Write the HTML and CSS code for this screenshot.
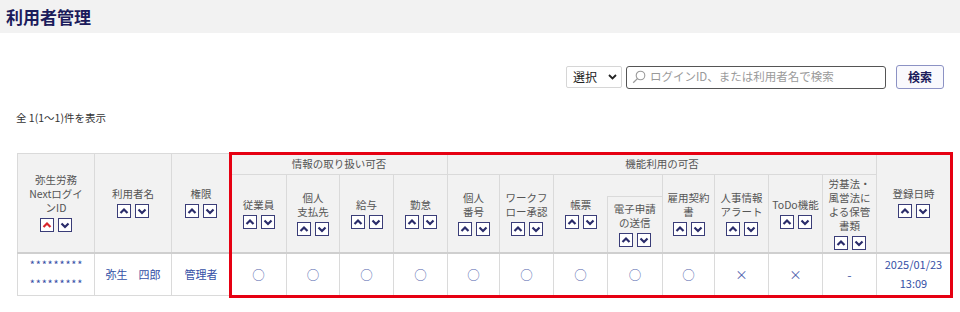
FILE: index.html
```html
<!DOCTYPE html>
<html lang="ja">
<head>
<meta charset="utf-8">
<title>利用者管理</title>
<link rel="stylesheet" href="styles.css">
</head>
<body>
<header class="page-head"><h1 class="page-title">利用者管理</h1></header>

<div class="toolbar">
  <div class="select">選択 <svg class="sel-arrow" width="9" height="6" viewBox="0 0 9 6"><polyline points="1,1 4.5,4.5 8,1" fill="none" stroke="#222" stroke-width="1.8"/></svg></div>
  <div class="search">
    <svg class="lens" width="14" height="14" viewBox="0 0 14 14"><circle cx="8.5" cy="5.5" r="4.3" fill="none" stroke="#9a9a9a" stroke-width="1.1"/><line x1="5.4" y1="8.6" x2="1.2" y2="12.8" stroke="#9a9a9a" stroke-width="1.3"/></svg>
    <span class="placeholder">ログインID、または利用者名で検索</span>
  </div>
  <button class="btn-search">検索</button>
</div>

<p class="count">全 1(1～1)件を表示</p>

<div class="table-wrap">
  <table class="users">
    <colgroup>
      <col style="width:77px"><col style="width:77px"><col style="width:59px">
      <col style="width:56px"><col style="width:53px"><col style="width:54px"><col style="width:54px">
      <col style="width:52px"><col style="width:54px"><col style="width:54px"><col style="width:55px">
      <col style="width:52px"><col style="width:54px"><col style="width:54px"><col style="width:54px">
      <col style="width:74px">
    </colgroup>
    <thead>
      <tr class="r1">
        <th rowspan="2"><div class="lbl">弥生労務<br>Nextログイ<br>ンID</div><div class="sort"><span class="sb active"><svg viewBox="0 0 12 12"><polyline points="2.5,8 6,4.5 9.5,8"/></svg></span><span class="sb"><svg viewBox="0 0 12 12"><polyline points="2.5,4.5 6,8 9.5,4.5"/></svg></span></div></th>
        <th rowspan="2"><div class="lbl">利用者名</div><div class="sort"><span class="sb"><svg viewBox="0 0 12 12"><polyline points="2.5,8 6,4.5 9.5,8"/></svg></span><span class="sb"><svg viewBox="0 0 12 12"><polyline points="2.5,4.5 6,8 9.5,4.5"/></svg></span></div></th>
        <th rowspan="2"><div class="lbl">権限</div><div class="sort"><span class="sb"><svg viewBox="0 0 12 12"><polyline points="2.5,8 6,4.5 9.5,8"/></svg></span><span class="sb"><svg viewBox="0 0 12 12"><polyline points="2.5,4.5 6,8 9.5,4.5"/></svg></span></div></th>
        <th colspan="4" class="group">情報の取り扱い可否</th>
        <th colspan="8" class="group">機能利用の可否</th>
        <th rowspan="2"><div class="lbl">登録日時</div><div class="sort"><span class="sb"><svg viewBox="0 0 12 12"><polyline points="2.5,8 6,4.5 9.5,8"/></svg></span><span class="sb"><svg viewBox="0 0 12 12"><polyline points="2.5,4.5 6,8 9.5,4.5"/></svg></span></div></th>
      </tr>
      <tr class="r2">
        <th><div class="lbl">従業員</div><div class="sort"><span class="sb"><svg viewBox="0 0 12 12"><polyline points="2.5,8 6,4.5 9.5,8"/></svg></span><span class="sb"><svg viewBox="0 0 12 12"><polyline points="2.5,4.5 6,8 9.5,4.5"/></svg></span></div></th>
        <th><div class="lbl">個人<br>支払先</div><div class="sort"><span class="sb"><svg viewBox="0 0 12 12"><polyline points="2.5,8 6,4.5 9.5,8"/></svg></span><span class="sb"><svg viewBox="0 0 12 12"><polyline points="2.5,4.5 6,8 9.5,4.5"/></svg></span></div></th>
        <th><div class="lbl">給与</div><div class="sort"><span class="sb"><svg viewBox="0 0 12 12"><polyline points="2.5,8 6,4.5 9.5,8"/></svg></span><span class="sb"><svg viewBox="0 0 12 12"><polyline points="2.5,4.5 6,8 9.5,4.5"/></svg></span></div></th>
        <th><div class="lbl">勤怠</div><div class="sort"><span class="sb"><svg viewBox="0 0 12 12"><polyline points="2.5,8 6,4.5 9.5,8"/></svg></span><span class="sb"><svg viewBox="0 0 12 12"><polyline points="2.5,4.5 6,8 9.5,4.5"/></svg></span></div></th>
        <th><div class="lbl">個人<br>番号</div><div class="sort"><span class="sb"><svg viewBox="0 0 12 12"><polyline points="2.5,8 6,4.5 9.5,8"/></svg></span><span class="sb"><svg viewBox="0 0 12 12"><polyline points="2.5,4.5 6,8 9.5,4.5"/></svg></span></div></th>
        <th><div class="lbl">ワークフ<br>ロー承認</div><div class="sort"><span class="sb"><svg viewBox="0 0 12 12"><polyline points="2.5,8 6,4.5 9.5,8"/></svg></span><span class="sb"><svg viewBox="0 0 12 12"><polyline points="2.5,4.5 6,8 9.5,4.5"/></svg></span></div></th>
        <th class="no-right"><div class="lbl">帳票</div><div class="sort"><span class="sb"><svg viewBox="0 0 12 12"><polyline points="2.5,8 6,4.5 9.5,8"/></svg></span><span class="sb"><svg viewBox="0 0 12 12"><polyline points="2.5,4.5 6,8 9.5,4.5"/></svg></span></div></th>
        <th class="shifted"><div class="shift-box"><div class="lbl">電子申請<br>の送信</div><div class="sort"><span class="sb"><svg viewBox="0 0 12 12"><polyline points="2.5,8 6,4.5 9.5,8"/></svg></span><span class="sb"><svg viewBox="0 0 12 12"><polyline points="2.5,4.5 6,8 9.5,4.5"/></svg></span></div></div></th>
        <th><div class="lbl">雇用契約<br>書</div><div class="sort"><span class="sb"><svg viewBox="0 0 12 12"><polyline points="2.5,8 6,4.5 9.5,8"/></svg></span><span class="sb"><svg viewBox="0 0 12 12"><polyline points="2.5,4.5 6,8 9.5,4.5"/></svg></span></div></th>
        <th><div class="lbl">人事情報<br>アラート</div><div class="sort"><span class="sb"><svg viewBox="0 0 12 12"><polyline points="2.5,8 6,4.5 9.5,8"/></svg></span><span class="sb"><svg viewBox="0 0 12 12"><polyline points="2.5,4.5 6,8 9.5,4.5"/></svg></span></div></th>
        <th><div class="lbl">ToDo機能</div><div class="sort"><span class="sb"><svg viewBox="0 0 12 12"><polyline points="2.5,8 6,4.5 9.5,8"/></svg></span><span class="sb"><svg viewBox="0 0 12 12"><polyline points="2.5,4.5 6,8 9.5,4.5"/></svg></span></div></th>
        <th><div class="lbl">労基法・<br>風営法に<br>よる保管<br>書類</div><div class="sort"><span class="sb"><svg viewBox="0 0 12 12"><polyline points="2.5,8 6,4.5 9.5,8"/></svg></span><span class="sb"><svg viewBox="0 0 12 12"><polyline points="2.5,4.5 6,8 9.5,4.5"/></svg></span></div></th>
      </tr>
    </thead>
    <tbody>
      <tr>
        <td class="link stars">*********<br>*********</td>
        <td class="link">弥生　四郎</td>
        <td class="link">管理者</td>
        <td class="mark">○</td>
        <td class="mark">○</td>
        <td class="mark">○</td>
        <td class="mark">○</td>
        <td class="mark">○</td>
        <td class="mark">○</td>
        <td class="mark">○</td>
        <td class="mark">○</td>
        <td class="mark">○</td>
        <td class="mark">×</td>
        <td class="mark">×</td>
        <td class="mark">-</td>
        <td class="link">2025/01/23<br>13:09</td>
      </tr>
    </tbody>
  </table>
  <div class="highlight"></div>
</div>
</body>
</html>
```

FILE: styles.css
```css
* { box-sizing: border-box; }
html, body { margin: 0; padding: 0; background: #fff; }
body {
  font-family: "Noto Sans CJK JP", "Noto Sans", sans-serif;
  color: #333;
  width: 960px;
  height: 312px;
  overflow: hidden;
}
.page-head {
  height: 33px;
  background: #f2f2f2;
  padding-left: 6px;
  display: flex;
  align-items: center;
}
.page-title {
  margin: 0;
  font-size: 17px;
  font-weight: bold;
  color: #1c1c5c;
}
.toolbar {
  margin-top: 32px;
  display: flex;
  justify-content: flex-end;
  align-items: center;
  padding-right: 16px;
  height: 24px;
}
.select {
  width: 56px;
  height: 22px;
  border: 1px solid #d6d6d6;
  border-radius: 2px;
  font-size: 12px;
  color: #222;
  display: flex;
  align-items: center;
  justify-content: space-between;
  padding: 0 4px 0 6px;
  line-height: 1;
}
.sel-arrow { display: block; }
.search {
  margin-left: 4px;
  width: 260px;
  height: 23px;
  border: 1.5px solid #555;
  border-radius: 3px;
  display: flex;
  align-items: center;
  padding-left: 5px;
  gap: 4px;
}
.lens { display: block; }
.placeholder {
  font-size: 11.5px;
  color: #9a9a9a;
  line-height: 1;
}
.btn-search {
  margin-left: 10px;
  width: 48px;
  height: 24px;
  border: 1px solid #8c92c4;
  border-radius: 3px;
  background: #f9f9fd;
  color: #1c1c5c;
  font-family: inherit;
  font-size: 12px;
  font-weight: bold;
  padding: 0;
  line-height: 1;
}
.count {
  margin: 22px 0 0 16px;
  font-size: 10.5px;
  line-height: 14px;
  color: #333;
}
.table-wrap {
  position: relative;
  margin: 28px 0 0 17px;
  width: 933px;
}
.users {
  width: 933px;
  border-collapse: collapse;
  table-layout: fixed;
}
.users th, .users td {
  border: 1px solid #dadada;
  padding: 0;
  text-align: center;
  vertical-align: middle;
}
.users th {
  background: #f2f2f2;
  font-weight: normal;
  font-size: 10.5px;
  line-height: 14px;
  color: #555;
}
.users tr.r1 { height: 21px; }
.users tr.r2 { height: 78px; }
.users thead tr.r2 th,
.users thead tr.r1 th[rowspan] { border-bottom: 2px solid #cfcfcf; }
.users th.no-right { border-right: none; }
.users th.shifted {
  border-left: none;
  vertical-align: bottom;
}
.shift-box {
  height: 56px;
  border-top: 1px solid #dadada;
  border-left: 1px solid #dadada;
  margin-left: -1px;
  padding-top: 5px;
}
.sort {
  display: flex;
  justify-content: center;
  gap: 4px;
  margin-top: 3px;
}
.sb {
  width: 14px;
  height: 14px;
  border: 1px solid #3a3d78;
  background: #fff;
  display: block;
}
.sb svg {
  display: block;
  width: 12px;
  height: 12px;
  fill: none;
  stroke: #2a2c6a;
  stroke-width: 2.2;
}
.sb.active svg { stroke: #d8262c; }
.users td {
  height: 43px;
  background: #fff;
  font-size: 11px;
  line-height: 19px;
}
.users td.link { color: #3550a6; }
.users td.stars { letter-spacing: 0.8px; padding-left: 1px; }
.users td.mark { color: #4f64ad; font-size: 12.5px; }
.highlight {
  position: absolute;
  left: 212px;
  top: -1px;
  width: 724px;
  height: 146px;
  border: 3px solid #e60012;
  pointer-events: none;
}
```
